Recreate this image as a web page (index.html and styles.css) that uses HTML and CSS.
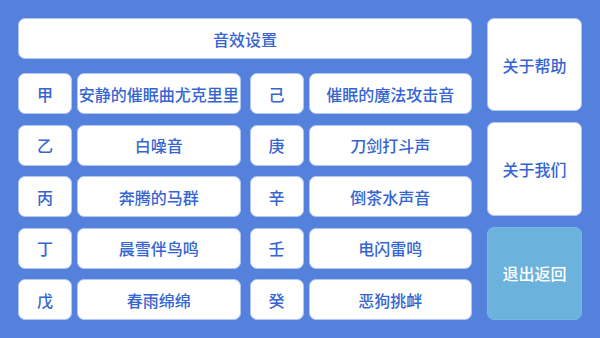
FILE: index.html
```html
<!DOCTYPE html>
<html>
	<head>
		<meta charset="utf-8">
		<title>音效设置</title>
		<link rel="stylesheet" href="styles.css">
	</head>
	<body>
		<div id="panel">
			<div class="left">
				<div class="title btn">音效设置</div>
				<ul class="list">
					<li>
						<div class="group"><span class="btn key">甲</span><span class="btn name">安静的催眠曲尤克里里</span></div>
						<div class="group"><span class="btn key">己</span><span class="btn name">催眠的魔法攻击音</span></div>
					</li>
					<li>
						<div class="group"><span class="btn key">乙</span><span class="btn name">白噪音</span></div>
						<div class="group"><span class="btn key">庚</span><span class="btn name">刀剑打斗声</span></div>
					</li>
					<li>
						<div class="group"><span class="btn key">丙</span><span class="btn name">奔腾的马群</span></div>
						<div class="group"><span class="btn key">辛</span><span class="btn name">倒茶水声音</span></div>
					</li>
					<li>
						<div class="group"><span class="btn key">丁</span><span class="btn name">晨雪伴鸟鸣</span></div>
						<div class="group"><span class="btn key">壬</span><span class="btn name">电闪雷鸣</span></div>
					</li>
					<li>
						<div class="group"><span class="btn key">戊</span><span class="btn name">春雨绵绵</span></div>
						<div class="group"><span class="btn key">癸</span><span class="btn name">恶狗挑衅</span></div>
					</li>
				</ul>
			</div>
			<div class="right">
				<div class="btn side">关于帮助</div>
				<div class="btn side">关于我们</div>
				<div class="btn side exit">退出返回</div>
			</div>
		</div>
	</body>
</html>
```

FILE: styles.css
```css
html,body,ul,li{margin: 0; padding: 0;}
ul,li{list-style: none;}
body{
	width: 600px;
	height: 338px;
	background: #5381dc;
	font-family: "Noto Sans CJK SC", "Noto Sans", sans-serif;
	font-size: 16px;
	font-weight: 500;
	color: #3565d2;
	overflow: hidden;
}
#panel{
	display: flex;
	padding: 18px 18px 18px 18px;
	height: 302px;
	gap: 15px;
}
.btn{
	display: flex;
	justify-content: center;
	align-items: center;
	background: #fff;
	border: 1px solid #b3c7f2;
	border-radius: 7px;
	box-sizing: border-box;
	white-space: nowrap;
	line-height: 1;
}
.left{
	width: 454px;
	display: flex;
	flex-direction: column;
}
.title{
	height: 41px;
}
.list{
	margin-top: 14px;
	flex: 1;
	display: flex;
	flex-direction: column;
	gap: 10.5px;
}
.list li{
	flex: 1;
	display: flex;
	gap: 9px;
}
.group{
	flex: 1;
	display: flex;
	gap: 5px;
}
.key{
	width: 54px;
}
.name{
	flex: 1;
}
.right{
	flex: 1;
	display: flex;
	flex-direction: column;
	gap: 11px;
}
.side{
	flex: 1;
}
.exit{
	background: #6bb2dc;
	border-color: #78b8e2;
	color: #fff;
}
```
